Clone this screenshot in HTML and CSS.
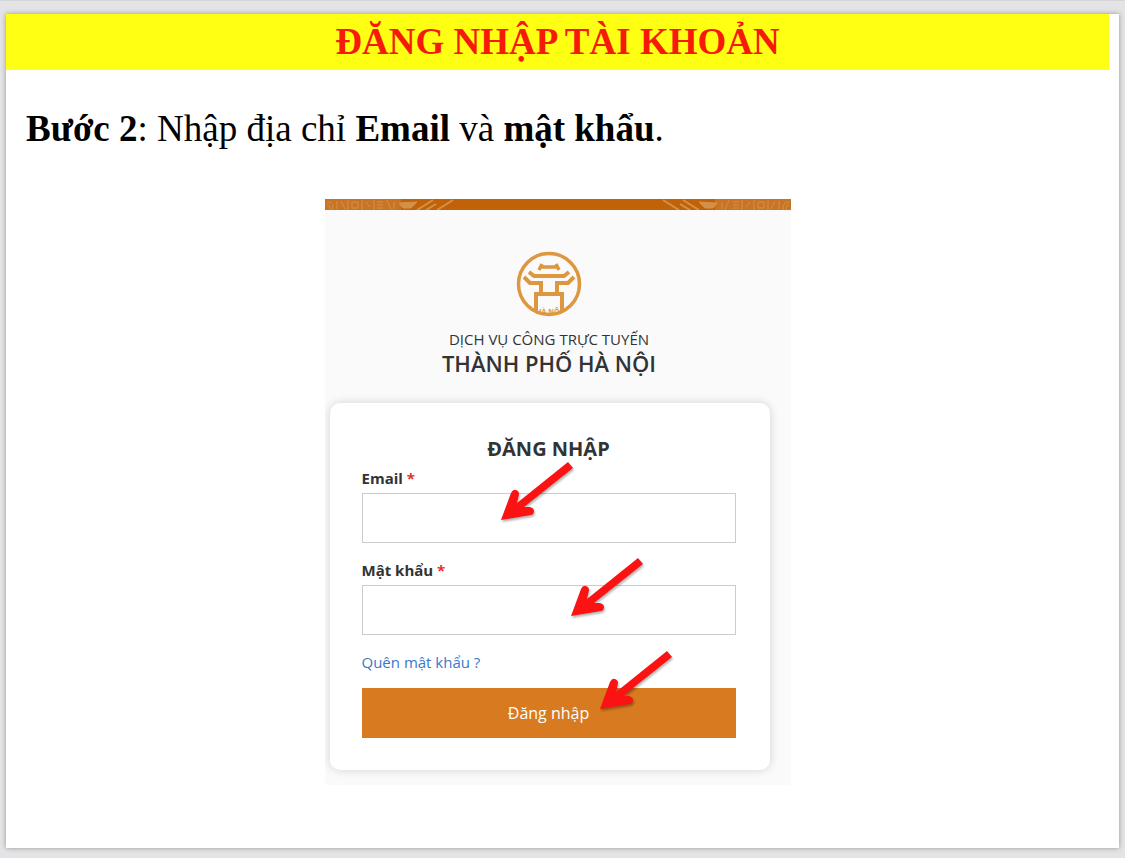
FILE: index.html
```
<!DOCTYPE html>
<html lang="vi">
<head>
  <meta charset="UTF-8" />
  <meta name="viewport" content="width=device-width, initial-scale=1.0"/>
  <title>Đăng nhập tài khoản</title>
  <link rel="stylesheet" href="styles.css">
</head>
<body>
  <svg class="defs" aria-hidden="true">
    <symbol id="arrow" viewBox="0 0 76 64">
      <path d="M70 0 L75 6 L26 45 L32 45 Q36 46 36 49 Q36 52 33 53 L3 58 L13 31 Q15 27 18 28 Q21 29 21 32 L19 41 Z" fill="#fb1212"/>
    </symbol>
  </svg>

  <main class="slide">
    <div class="content">
      <h1 class="title">ĐĂNG NHẬP TÀI KHOẢN</h1>
      <p class="step"><b>Bước 2</b>: Nhập địa chỉ <b>Email</b> và <b>mật khẩu</b>.</p>

      <section class="portal">
        <svg class="banner" viewBox="0 0 466 11" preserveAspectRatio="none" aria-hidden="true">
          <rect width="466" height="11" fill="#c26208"/>
          <g id="pattern" fill="none" stroke="#d2914a" stroke-width="1">
            <path d="M0 0 H76 V11 H0 Z" fill="#c87424" stroke="none"/>
            <path d="M2 3 Q8 2 8 11 M2 6 Q5 5 5 11 M12 2 V10 M16 2 L20 10 M23 1 V11 M27 3 H33 V9 H27 Z M37 1 V11 M41 3 L45 8 M49 1 V11 M52 3 H58 M52 6 H58 M52 9 H58 M62 1 L66 11 M69 3 V10"/>
            <path d="M74 4 L92 3 L86 9 L78 9 Z" fill="#d2914a"/>
            <path d="M92 11 L108 1 M101 11 L111 5 M112 11 L128 1" stroke-width="2"/>
          </g>
          <use href="#pattern" transform="translate(466 0) scale(-1 1)"/>
        </svg>

        <header class="brand">
          <svg class="emblem" viewBox="0 0 66 66" role="img" aria-label="Hà Nội">
            <g fill="none" stroke="#dd973f" stroke-width="4">
              <circle cx="33" cy="33" r="30.5" stroke-width="3.5"/>
              <path d="M23 19 L26 13 M43 19 L40 13 M24 16 H42" stroke-width="3.5"/>
              <path d="M13 21 L18 25 H48 L53 21"/>
              <path d="M8 26 L14 32 H25 V43 M58 26 L52 32 H41 V43"/>
              <path d="M20 60 V43 H46 V60"/>
            </g>
            <text class="emblem-text" x="33" y="63" text-anchor="middle">HÀ NỘI</text>
          </svg>
          <p class="brand-sub">DỊCH VỤ CÔNG TRỰC TUYẾN</p>
          <p class="brand-name">THÀNH PHỐ HÀ NỘI</p>
        </header>

        <form class="card">
          <h2 class="card-title">ĐĂNG NHẬP</h2>
          <label class="label" for="email">Email <span class="required">*</span></label>
          <div class="field">
            <input class="input" type="email" id="email">
            <svg class="arrow arrow-email" aria-hidden="true"><use href="#arrow"/></svg>
          </div>
          <label class="label" for="password">Mật khẩu <span class="required">*</span></label>
          <div class="field">
            <input class="input" type="password" id="password">
            <svg class="arrow arrow-password" aria-hidden="true"><use href="#arrow"/></svg>
          </div>
          <a class="forgot" href="#">Quên mật khẩu ?</a>
          <div class="field">
            <button class="submit" type="button">Đăng nhập</button>
            <svg class="arrow arrow-submit" aria-hidden="true"><use href="#arrow"/></svg>
          </div>
        </form>
      </section>
    </div>
  </main>
</body>
</html>
```
FILE: styles.css
```
* {
  box-sizing: border-box;
}
body {
  margin: 0;
  min-height: 100vh;
  padding: 13px 6px 10px;
  display: flex;
  background: #e4e4e6;
  border-top: 1px solid #d4d6d8;
}
h1, h2, p {
  margin: 0;
}
.defs {
  position: absolute;
  width: 0;
  height: 0;
}
.slide {
  flex: 1;
  padding-right: 10px;
  background: #fff;
  box-shadow: 0 0 5px rgba(0, 0, 0, 0.35);
}
.content {
  display: flex;
  flex-direction: column;
}
.title {
  background: #ffff14;
  color: #f51a0a;
  font: bold 37px/56px "Liberation Serif", "Times New Roman", serif;
  text-align: center;
}
.step {
  margin: 38px 20px 0;
  color: #000;
  font: 37px/42px "Liberation Serif", "Times New Roman", serif;
}
.portal {
  align-self: center;
  width: 466px;
  max-width: 100%;
  margin: 49px 0 20px;
  background: #fafafa;
  color: #333336;
  font-family: "Open Sans", sans-serif;
  overflow: hidden;
}
.banner {
  display: block;
  width: 100%;
  height: 11px;
}
.brand {
  padding: 41px 21px 26px 4px;
  text-align: center;
}
.emblem {
  display: block;
  width: 66px;
  height: 66px;
  margin: 0 auto 12px;
}
.emblem-text {
  fill: #dd973f;
  font-size: 7px;
  font-weight: bold;
}
.brand-sub {
  font-size: 15px;
  line-height: 20px;
}
.brand-name {
  font-size: 22px;
  font-weight: 600;
  line-height: 28px;
}
.card {
  display: flex;
  flex-direction: column;
  margin: 0 21px 15px 5px;
  padding: 33px 34px 32px 32px;
  background: #fff;
  border-radius: 10px;
  box-shadow: 0 0 10px rgba(0, 0, 0, 0.16);
}
.card-title {
  font-size: 20px;
  line-height: 26px;
  text-align: center;
}
.label {
  padding: 5px 0 4px;
  font-size: 15px;
  font-weight: bold;
  line-height: 22px;
}
.required {
  color: #ee2a2a;
}
.field {
  position: relative;
  height: 50px;
}
.field + .label {
  margin-top: 11px;
}
.input {
  width: 100%;
  height: 50px;
  padding: 0 12px;
  background: #fff;
  border: 1px solid #ccc;
  font: 16px "Open Sans", sans-serif;
}
.forgot {
  align-self: flex-start;
  margin: 16px 0 15px;
  color: #3c78c8;
  font-size: 15px;
  line-height: 22px;
  text-decoration: none;
}
.submit {
  width: 100%;
  height: 50px;
  border: 0;
  background: #d87a20;
  color: #fff;
  font: 16px "Open Sans", sans-serif;
}
/* pointers drawn over the form */
.arrow {
  position: absolute;
  width: 76px;
  height: 64px;
  filter: drop-shadow(1px 2px 1px rgba(0, 0, 0, 0.3));
  pointer-events: none;
}
.arrow-email {
  top: -31px;
  right: 162px;
}
.arrow-password {
  top: -27px;
  right: 92px;
}
.arrow-submit {
  top: -37px;
  right: 63px;
}
```
